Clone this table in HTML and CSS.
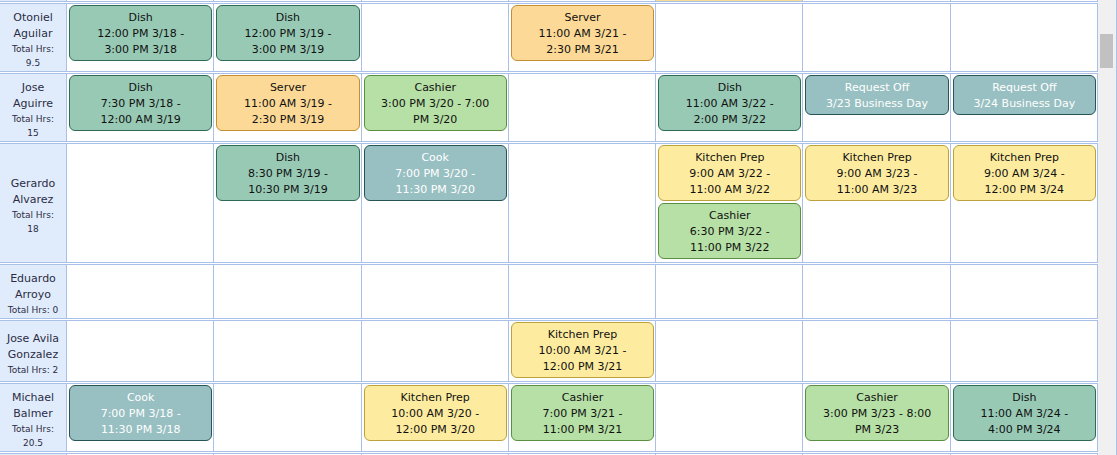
FILE: index.html
```html
<!DOCTYPE html>
<html lang="en">
<head>
<meta charset="utf-8">
<title>Schedule</title>
<link rel="stylesheet" href="styles.css">
</head>
<body>
<div class="screen">
  <div class="schedule">
    <div class="row peek">
      <div class="name"></div>
      <div class="day"></div><div class="day"></div><div class="day"></div><div class="day"></div>
      <div class="day peek-fill"></div>
      <div class="day"></div><div class="day"></div>
    </div>

    <div class="row">
      <div class="name"><div class="emp">Otoniel Aguilar</div><div class="hrs">Total Hrs: 9.5</div></div>
      <div class="day"><div class="shift dish"><div>Dish</div><div>12:00 PM 3/18 - 3:00 PM 3/18</div></div></div>
      <div class="day"><div class="shift dish"><div>Dish</div><div>12:00 PM 3/19 - 3:00 PM 3/19</div></div></div>
      <div class="day"></div>
      <div class="day"><div class="shift server"><div>Server</div><div>11:00 AM 3/21 - 2:30 PM 3/21</div></div></div>
      <div class="day"></div>
      <div class="day"></div>
      <div class="day"></div>
    </div>

    <div class="row">
      <div class="name"><div class="emp">Jose Aguirre</div><div class="hrs">Total Hrs: 15</div></div>
      <div class="day"><div class="shift dish"><div>Dish</div><div>7:30 PM 3/18 - 12:00 AM 3/19</div></div></div>
      <div class="day"><div class="shift server"><div>Server</div><div>11:00 AM 3/19 - 2:30 PM 3/19</div></div></div>
      <div class="day"><div class="shift cashier"><div>Cashier</div><div>3:00 PM 3/20 - 7:00 PM 3/20</div></div></div>
      <div class="day"></div>
      <div class="day"><div class="shift dish"><div>Dish</div><div>11:00 AM 3/22 - 2:00 PM 3/22</div></div></div>
      <div class="day"><div class="shift off"><div>Request Off</div><div>3/23 Business Day</div></div></div>
      <div class="day"><div class="shift off"><div>Request Off</div><div>3/24 Business Day</div></div></div>
    </div>

    <div class="row">
      <div class="name"><div class="emp">Gerardo Alvarez</div><div class="hrs">Total Hrs: 18</div></div>
      <div class="day"></div>
      <div class="day"><div class="shift dish"><div>Dish</div><div>8:30 PM 3/19 - 10:30 PM 3/19</div></div></div>
      <div class="day"><div class="shift cook"><div>Cook</div><div>7:00 PM 3/20 - 11:30 PM 3/20</div></div></div>
      <div class="day"></div>
      <div class="day">
        <div class="shift prep"><div>Kitchen Prep</div><div>9:00 AM 3/22 - 11:00 AM 3/22</div></div>
        <div class="shift cashier"><div>Cashier</div><div>6:30 PM 3/22 - 11:00 PM 3/22</div></div>
      </div>
      <div class="day"><div class="shift prep"><div>Kitchen Prep</div><div>9:00 AM 3/23 - 11:00 AM 3/23</div></div></div>
      <div class="day"><div class="shift prep"><div>Kitchen Prep</div><div>9:00 AM 3/24 - 12:00 PM 3/24</div></div></div>
    </div>

    <div class="row">
      <div class="name"><div class="emp">Eduardo Arroyo</div><div class="hrs">Total Hrs: 0</div></div>
      <div class="day"></div><div class="day"></div><div class="day"></div><div class="day"></div>
      <div class="day"></div><div class="day"></div><div class="day"></div>
    </div>

    <div class="row">
      <div class="name"><div class="emp">Jose Avila Gonzalez</div><div class="hrs">Total Hrs: 2</div></div>
      <div class="day"></div>
      <div class="day"></div>
      <div class="day"></div>
      <div class="day"><div class="shift prep"><div>Kitchen Prep</div><div>10:00 AM 3/21 - 12:00 PM 3/21</div></div></div>
      <div class="day"></div>
      <div class="day"></div>
      <div class="day"></div>
    </div>

    <div class="row">
      <div class="name"><div class="emp">Michael Balmer</div><div class="hrs">Total Hrs: 20.5</div></div>
      <div class="day"><div class="shift cook"><div>Cook</div><div>7:00 PM 3/18 - 11:30 PM 3/18</div></div></div>
      <div class="day"></div>
      <div class="day"><div class="shift prep"><div>Kitchen Prep</div><div>10:00 AM 3/20 - 12:00 PM 3/20</div></div></div>
      <div class="day"><div class="shift cashier"><div>Cashier</div><div>7:00 PM 3/21 - 11:00 PM 3/21</div></div></div>
      <div class="day"></div>
      <div class="day"><div class="shift cashier"><div>Cashier</div><div>3:00 PM 3/23 - 8:00 PM 3/23</div></div></div>
      <div class="day"><div class="shift dish"><div>Dish</div><div>11:00 AM 3/24 - 4:00 PM 3/24</div></div></div>
    </div>

    <div class="row tail">
      <div class="name"></div>
      <div class="day"></div><div class="day"></div><div class="day"></div><div class="day"></div>
      <div class="day"></div><div class="day"></div><div class="day"></div>
    </div>
  </div>
  <div class="scrollbar"><div class="thumb"></div></div>
  <div class="edge"></div>
</div>
</body>
</html>
```

FILE: styles.css
```css
* {
  box-sizing: border-box;
}

html,
body {
  margin: 0;
  padding: 0;
  background: #ffffff;
  overflow: hidden;
}

body {
  font-family: "DejaVu Sans", Verdana, sans-serif;
  font-size: 11px;
  color: #111111;
}

.screen {
  display: flex;
  width: 1117px;
  height: 455px;
  overflow: hidden;
}

.schedule {
  width: 1098px;
  flex: none;
}

.row {
  display: grid;
  grid-template-columns: 67px repeat(7, 1fr);
  border-top: 1px solid #a9c0e8;
  border-bottom: 1px solid #a9c0e8;
  margin-bottom: 1px;
}

.row.peek {
  border-top: none;
  height: 2px;
  overflow: hidden;
}

.peek-fill {
  background: #f6dc8e;
}

.row.tail {
  height: 40px;
}

.name {
  background: #e0ecfc;
  border-right: 1px solid #a9c0e8;
  display: flex;
  flex-direction: column;
  justify-content: center;
  align-items: center;
  text-align: center;
  padding: 6px 5px 1px;
  color: #2c2c44;
}

.emp {
  font-size: 11px;
  line-height: 16px;
}

.hrs {
  font-size: 9px;
  line-height: 14px;
}

.day {
  border-right: 1px solid #a9c0e8;
  padding: 1px;
  min-width: 0;
}

.shift {
  margin: 0 0 2px 1px;
  border: 1px solid;
  border-radius: 6px;
  padding: 4px 14px 2px;
  text-align: center;
  line-height: 16px;
}

.dish {
  background: #98c9b5;
  border-color: #2d6b54;
}

.server {
  background: #fcd996;
  border-color: #c48f30;
}

.cashier {
  background: #b6e0a5;
  border-color: #5a8f42;
}

.prep {
  background: #fdeca0;
  border-color: #bba23c;
}

.cook,
.off {
  background: #98bfc1;
  border-color: #275556;
  color: #ffffff;
}

.scrollbar {
  width: 17px;
  flex: none;
  background: #f0f0f0;
  padding: 34px 2px 0 2px;
}

.thumb {
  height: 34px;
  background: #c1c1c1;
}

.edge {
  width: 2px;
  flex: none;
  background: #f0f0f0;
  border-right: 1px solid #a9c0e8;
}
```
